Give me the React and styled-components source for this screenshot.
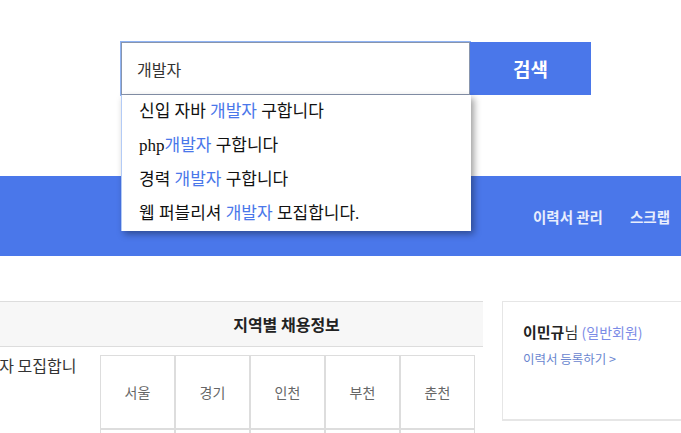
import React, { useState } from "react";
import styled, { createGlobalStyle } from "styled-components";

const GlobalStyle = createGlobalStyle`
  html, body {
    margin: 0;
    padding: 0;
    background: #fff;
    overflow: hidden;
  }
  body {
    font-family: "Noto Sans CJK KR", "Noto Sans", sans-serif;
    color: #333;
  }
`;

const BLUE = "#4a77ea";

const Top = styled.div`
  position: relative;
  height: 176px;
`;

const SearchForm = styled.form`
  display: flex;
  margin: 0;
  padding: 42px 0 0 121px;
`;

const SearchInput = styled.input`
  box-sizing: border-box;
  width: 349px;
  height: 53px;
  padding: 0 15px;
  border: 1px solid #8895ad;
  box-shadow: 0 0 0 1px #8fb3f4;
  outline: none;
  font-family: "Noto Sans CJK KR", sans-serif;
  font-size: 16px;
  color: #333;
  caret-color: #222;
`;

const SearchButton = styled.button`
  width: 121px;
  height: 53px;
  border: none;
  background: ${BLUE};
  color: #fff;
  font-family: "Noto Sans CJK KR", sans-serif;
  font-size: 19px;
  font-weight: 700;
  cursor: pointer;
`;

const Suggest = styled.ul`
  position: absolute;
  top: 95px;
  left: 121px;
  z-index: 5;
  box-sizing: border-box;
  width: 350px;
  margin: 0;
  padding: 0;
  list-style: none;
  background: #fff;
  border-left: 1px solid #b3cbf6;
  box-shadow: 3px 3px 7px rgba(0, 0, 0, 0.38);
`;

const SuggestItem = styled.li`
  height: 34px;
  line-height: 34px;
  padding-left: 17px;
  font-family: "Liberation Serif", "Noto Sans CJK KR", serif;
  font-size: 17px;
  color: #111;
`;

const Mark = styled.span`
  color: ${BLUE};
`;

const Band = styled.nav`
  display: flex;
  justify-content: flex-end;
  align-items: center;
  gap: 27px;
  height: 80px;
  padding-right: 11px;
  background: ${BLUE};
`;

const NavLink = styled.a`
  color: #e8eefd;
  font-size: 14.5px;
  font-weight: 600;
  text-decoration: none;
`;

const Content = styled.div`
  display: flex;
  align-items: flex-start;
  gap: 19px;
  margin-top: 45px;
`;

const Board = styled.section`
  flex: none;
  display: grid;
  grid-template-columns: 310px 393px;
  margin-left: -220px;
`;

const BoardHead = styled.div`
  height: 44px;
  line-height: 44px;
  background: #f7f7f7;
  border-top: 1px solid #ddd;
  border-bottom: 1px solid #ddd;
  text-align: center;
  font-size: 16px;
  font-weight: 700;
  color: #222;
`;

const PostList = styled.ul`
  margin: 0;
  padding: 6px 6px 0 109px;
  list-style: none;
`;

const Post = styled.li`
  height: 24px;
  overflow: hidden;
  font-size: 16px;
  line-height: 24px;
  color: #333;
`;

const RegionCell = styled.div`
  padding: 8px 8px 0 10px;
`;

const RegionTable = styled.table`
  border-collapse: separate;
  border-spacing: 0;
`;

const Td = styled.td`
  box-sizing: border-box;
  width: 75px;
  height: 74px;
  border: 1px solid #ddd;
  text-align: center;
  font-size: 14px;
  color: #666;
`;

const Side = styled.aside`
  flex: none;
  width: 220px;
  border: 1px solid #e6e6e6;
`;

const Profile = styled.div`
  height: 118px;
  box-sizing: border-box;
  padding: 19px 0 0 20px;
  border-bottom: 1px solid #e6e6e6;
`;

const Name = styled.div`
  font-size: 15px;
  line-height: 22px;
  color: #333;
  b {
    color: #222;
  }
`;

const Grade = styled.span`
  font-size: 14px;
  color: #7b8be6;
`;

const ResumeLink = styled.a`
  display: block;
  margin-top: 6px;
  font-size: 12.5px;
  color: #6a86cf;
  text-decoration: none;
`;

const suggestions = [
  ["신입 자바 ", "개발자", " 구합니다"],
  ["php", "개발자", " 구합니다"],
  ["경력 ", "개발자", " 구합니다"],
  ["웹 퍼블리셔 ", "개발자", " 모집합니다."],
];

const regions = ["서울", "경기", "인천", "부천", "춘천"];

const App = () => {
  const [keyword, setKeyword] = useState("개발자");

  return (
    <>
      <GlobalStyle />
      <Top>
        <SearchForm onSubmit={(e) => e.preventDefault()}>
          <SearchInput
            autoFocus
            value={keyword}
            onChange={(e) => setKeyword(e.target.value)}
          />
          <SearchButton type="submit">검색</SearchButton>
        </SearchForm>
        <Suggest>
          {suggestions.map(([pre, hit, post], i) => (
            <SuggestItem key={i}>
              {pre}
              <Mark>{hit}</Mark>
              {post}
            </SuggestItem>
          ))}
        </Suggest>
      </Top>
      <Band>
        <NavLink href="#">이력서 관리</NavLink>
        <NavLink href="#">스크랩</NavLink>
      </Band>
      <Content>
        <Board>
          <BoardHead />
          <BoardHead>지역별 채용정보</BoardHead>
          <PostList>
            <Post>웹 퍼블리셔 개발자 모집합니다.</Post>
          </PostList>
          <RegionCell>
            <RegionTable>
              <tbody>
                <tr>
                  {regions.map((r) => (
                    <Td key={r}>{r}</Td>
                  ))}
                </tr>
                <tr>
                  {regions.map((r) => (
                    <Td key={r} />
                  ))}
                </tr>
              </tbody>
            </RegionTable>
          </RegionCell>
        </Board>
        <Side>
          <Profile>
            <Name>
              <b>이민규</b>님 <Grade>(일반회원)</Grade>
            </Name>
            <ResumeLink href="#">이력서 등록하기 &gt;</ResumeLink>
          </Profile>
        </Side>
      </Content>
    </>
  );
};

export default App;
